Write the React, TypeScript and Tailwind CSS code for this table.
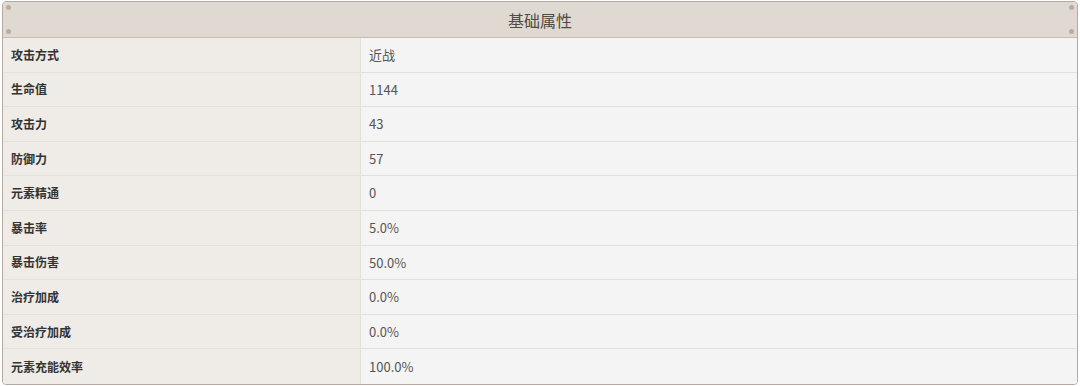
const rows: [string, string][] = [
  ["攻击方式", "近战"],
  ["生命值", "1144"],
  ["攻击力", "43"],
  ["防御力", "57"],
  ["元素精通", "0"],
  ["暴击率", "5.0%"],
  ["暴击伤害", "50.0%"],
  ["治疗加成", "0.0%"],
  ["受治疗加成", "0.0%"],
  ["元素充能效率", "100.0%"],
]

const Dot = () => <span className="block w-[5px] h-[5px] rounded-full bg-[#b9aca3]" />

export default function App() {
  return (
    <div
      className="w-[1080px] h-[386px] bg-white pt-[1px] pl-[2px]"
      style={{ fontFamily: '"Microsoft YaHei", "Noto Sans CJK SC", "Open Sans", sans-serif' }}
    >
      <div className="w-[1076px] border border-[#b7a99f] rounded-[4px] overflow-hidden">
        {/* header */}
        <div className="relative h-[36px] bg-[#e0d9d2] border-b border-[#c9bdb3] flex items-center justify-center text-[16px] text-[#4f4a45]">
          基础属性
          <div className="absolute left-[3px] top-[3px] bottom-[3px] flex flex-col justify-between">
            <Dot />
            <Dot />
          </div>
          <div className="absolute right-[3px] top-[3px] bottom-[3px] flex flex-col justify-between">
            <Dot />
            <Dot />
          </div>
        </div>
        {rows.map(([k, v], i) => (
          <div
            key={k}
            className={`flex h-[34.6px] ${i < rows.length - 1 ? "border-b border-[#e4e1dd]" : ""}`}
          >
            <div className="w-[358px] shrink-0 bg-[#efebe6] border-r border-[#e4e1dd] flex items-center pl-[8px] text-[12px] font-bold text-[#333]">
              {k}
            </div>
            <div className="flex-1 bg-[#f4f4f4] flex items-center pl-[8px] text-[13px] text-[#555]">
              {v}
            </div>
          </div>
        ))}
      </div>
    </div>
  )
}
